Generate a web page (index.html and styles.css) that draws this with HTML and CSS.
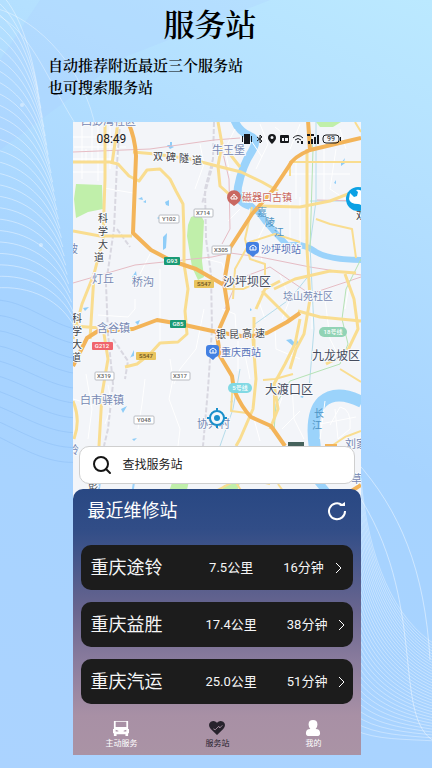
FILE: index.html
```html
<!DOCTYPE html>
<html lang="zh-CN">
<head>
  <meta charset="UTF-8">
  <meta name="viewport" content="width=device-width, initial-scale=1.0">
  <title>服务站</title>
  <link rel="stylesheet" href="styles.css">
</head>
<body>

  <svg class="waves" viewBox="0 0 432 768" preserveAspectRatio="none" aria-hidden="true">
    <path class="beam" d="M0 60L40 0H270L125 57L0 150Z"/>
    <g id="waves"></g>
    <circle class="spark" cx="22" cy="105" r="2"/>
    <circle class="spark" cx="41" cy="245" r="2"/>
  </svg>

  <header class="intro">
    <h1>服务站</h1>
    <p>自动推荐附近最近三个服务站<br>也可搜索服务站</p>
  </header>

  <main class="phone">
    <section class="map">
      <svg class="map-art" viewBox="73 123 288 376" preserveAspectRatio="xMidYMin slice" role="img" aria-label="地图">
        <!-- parks -->
        <g class="park">
          <path d="M76 185L102 186L103 210L88 213L76 219L74 200Z"/>
          <path d="M191 218L200 215L204 222L202 262L204 278L198 281L192 268L187 237L188 226Z"/>
          <path d="M316 123H341L333 128L320 128Z"/>
          <path d="M172 484L189 482L186 495L168 495Z"/>
          <path d="M224 486L240 484L236 495H220Z"/>
        </g>

        <!-- water -->
        <g class="river">
          <path class="w7" d="M234 120Q238 132 250 137Q259 140 252 152Q242 167 238 188Q236 203 250 207"/>
          <path class="w5" d="M246 203Q258 211 265 222Q278 237 288 247Q302 243 316 253Q330 261 361 261"/>
          <path class="w11" d="M315 450Q310 415 322 403Q336 390 362 403"/>
          <path class="w7" d="M316 480L330 497"/>
          <path class="w2" d="M100 483L98 496M134 483L132 496"/>
        </g>
        <g class="pond">
          <path d="M167 146h3v-3h2v4l2 1l-4 2zM138 200l4-2l1 3zM143 203l3-2v3zM163 238l4-4l-1 15l-3 2zM157 219l3-2v4zM165 203l4-2v6l-3-1zM132 278l4-6l1 7l-5 4zM83 309l6-1l-4 4zM135 323l5-2l-2 5zM130 359l4-8v6l-3 1zM121 410l6-3l-4 7zM132 440l5-1l-3 3zM286 341l5-1l4 4l2-3l2 4l-6 2zM341 164l4-5l-1 4l4-1l-7 5zM334 184l2-3v4zM250 309l2 2l-2 1zM230 403l3-2l-1 3zM300 398l4-3l-1 4zM341 465l3-2v3z"/>
        </g>

        <!-- small streets -->
        <g class="street">
          <path d="M73 138H100M74 148H126M82 125V180M92 127V163M98 123V182M110 123V170M118 130L117 170M73 160H112M73 173H106M86 150V163H120M104 189L133 194"/>
          <path d="M160 270V344M170 360L173 380L169 400L180 430L178 447M204 310L196 350L180 370L174 385M145 380L142 405L138 430M135 300V310L128 318L98 316"/>
          <path d="M206 260L222 264L226 275M252 143L262 158M240 210L228 222M262 205L268 220L258 240L262 262M270 200L284 205M290 203V240M300 198V246M310 203L306 240M280 175H350M296 160V200M324 145V205M336 150L330 190L345 200"/>
          <path d="M222 310L235 315L236 330L220 340M238 342V372M230 350L245 356L250 380M258 300L265 320M275 330L276 350L300 360M254 420L260 442M270 385L282 399L276 415M292 385L294 420L304 440M300 412L282 430M325 402L320 440M335 410L338 440L350 430Q352 410 340 408L330 426M320 425L356 418M73 400L90 405M86 375L92 410L88 440M108 386L112 405L105 425"/>
          <path d="M235 130L225 150L230 175M260 125L268 145L256 170M275 128L290 140M300 125L290 150M340 130L346 150M312 290V330M325 300L330 340L340 360M350 280L345 310M280 276L290 300L282 320M200 145L204 165L195 190M150 255L140 275"/>
        </g>

        <!-- railways and metro lines -->
        <g class="rail">
          <path d="M120 123L117 165L114 230L106 285L108 335L113 385L108 430L104 447"/>
          <path d="M214 123L213 160L205 190L206 240L211 275L212 330L208 390L203 447"/>
          <path d="M213 165L202 205M113 340L128 362L125 380M117 230L130 248"/>
        </g>
        <path class="metro-pink" d="M73 153L150 150L214 141L240 139M73 284L135 266L212 258L230 254L260 258L310 268L361 276M225 310L238 280L270 268L310 295L361 278M222 150L229 180L230 230L222 245"/>
        <path class="metro-blue" d="M316 123V202M361 202H310M316 202L310 246L314 330L309 390M240 370L233 410L220 447M255 325L290 300L310 275"/>
        <path class="metro-pink" d="M317 201L361 202"/>
        <path class="metro-green" d="M361 260L346 290L342 320L348 345L340 365L325 370L290 382L276 405L274 432L285 447M308 123L313 150L310 250"/>

        <!-- yellow roads -->
        <g class="road">
          <path class="w3" d="M105 123V180L103 240L94 275L82 305L73 340"/>
          <path class="w3" d="M133 153L155 155L190 160L213 166L241 173L262 183L278 192"/>
          <path class="w3" d="M73 163H110L118 165L129 177L139 182L147 171L160 170L170 180L176 192L183 205L184 235L184 265L188 290L185 312L187 335L178 343L160 344L150 355L137 365L125 368"/>
          <path class="w3" d="M73 232L100 237H132M118 123L112 165M94 276L90 340M73 327L102 329"/>
          <path class="w3" d="M104 335L108 360L102 395L99 447M73 402Q81 421 74 440"/>
          <path class="w3" d="M218 123L222 145L218 167L220 187L230 196M260 207L300 208L330 202L361 190M226 150L240 168"/>
          <path class="w2" d="M252 208L245 240L250 260L265 265L265 280L243 290L226 290M233 300L235 270L250 243L275 235L300 243M290 177V163H361M355 123L361 133M316 220L330 225L352 230L356 259"/>
          <path class="w3" d="M307 150V250L310 300L304 335L296 350L290 370M274 290L295 280L330 272L356 274M256 310L265 290L280 282M253 340L256 380L253 410L240 440L236 447M254 318L254 350M290 320L270 300L262 292"/>
          <path class="w3" d="M298 312L320 318L361 322M300 320L295 345L285 365L274 385L278 410L270 430M345 275L354 300L358 330L346 355L326 365"/>
          <path class="w2" d="M233 380L231 412L247 414M263 381L275 380L293 375M340 370L361 383M274 394L274 420M247 480L270 485M330 448L345 438L361 432M210 495L235 482L244 496M278 485L286 496"/>
        </g>

        <!-- highways -->
        <g class="highway">
          <path d="M127 121Q135 137 136 157L133 234L151 251L172 262L196 270L224 286"/>
          <path d="M308 121L310 151Q293 158 289 167L273 191L252 215L230 249L224 284L228 310L217 335L220 357L232 377L234 391Q242 409 251 418L271 427L285 447M310 151L361 139"/>
          <path d="M73 367L87 339L98 332L133 330L157 321L180 325L217 333L247 338L267 334L287 323L300 314"/>
          <path d="M325 447H337M350 493L361 486"/>
        </g>

        <!-- road number plates -->
        <g class="plate">
          <rect x="159" y="216" width="20" height="8" rx="1"/><text x="169" y="222">Y102</text>
          <rect x="194" y="210" width="19" height="8" rx="1"/><text x="203" y="216">X714</text>
          <rect x="212" y="247" width="19" height="8" rx="1"/><text x="221" y="253">X305</text>
          <rect x="95" y="373" width="19" height="8" rx="1"/><text x="104" y="379">X319</text>
          <rect x="171" y="373" width="19" height="8" rx="1"/><text x="180" y="379">X317</text>
          <rect x="134" y="417" width="20" height="8" rx="1"/><text x="144" y="423">Y048</text>
        </g>
        <g class="plate green">
          <rect x="164" y="258" width="16" height="8" rx="1"/><text x="172" y="264">G93</text>
          <rect x="170" y="321" width="16" height="8" rx="1"/><text x="178" y="327">G85</text>
          <rect class="dark" x="288" y="443" width="16" height="8"/>
        </g>
        <g class="plate amber">
          <rect x="194" y="281" width="20" height="8" rx="1"/><text x="204" y="287">S547</text>
          <rect x="136" y="353" width="20" height="8" rx="1"/><text x="146" y="359">S547</text>
        </g>
        <g class="plate red">
          <rect x="92" y="343" width="21" height="8" rx="1"/><text x="102" y="349">G212</text>
        </g>
        <g class="plate line5">
          <rect x="228" y="384" width="24" height="10" rx="5"/><text x="240" y="391">5号线</text>
        </g>
        <g class="plate line18">
          <rect x="319" y="328" width="28" height="10" rx="5"/><text x="333" y="335">18号线</text>
        </g>

        <!-- place names -->
        <g class="place">
          <text x="81" y="126">西彭湾社区</text>
          <text x="212" y="155">牛王堡</text>
          <text x="92" y="284">灯丘</text>
          <text x="132" y="287">桥沟</text>
          <text x="97" y="333">含谷镇</text>
          <text x="80" y="405">白市驿镇</text>
          <text class="small" x="283" y="301">埝山苑社区</text>
          <text x="197" y="429">协兴村</text>
          <text x="345" y="449">刘家</text>
          <text x="351" y="484">草</text>
          <text x="67" y="254">坡</text>
          <text x="68" y="455">岭</text>
        </g>
        <g class="district">
          <text x="223" y="287">沙坪坝区</text>
          <text x="312" y="361">九龙坡区</text>
          <text x="265" y="395">大渡口区</text>
        </g>
        <g class="road-name">
          <text><tspan x="153" y="161">双</tspan><tspan x="166" y="162">碑</tspan><tspan x="179" y="163">隧</tspan><tspan x="192" y="165">道</tspan></text>
          <text><tspan x="98" y="223">科</tspan><tspan x="98" y="236">学</tspan><tspan x="98" y="249">大</tspan><tspan x="94" y="262">道</tspan></text>
          <text><tspan x="72" y="323">科</tspan><tspan x="72" y="336">学</tspan><tspan x="72" y="349">大</tspan><tspan x="71" y="362">道</tspan></text>
          <text y="339"><tspan x="216">银</tspan><tspan x="229">昆</tspan><tspan x="242" y="338">高</tspan><tspan x="255" y="338">速</tspan></text>
          <text x="88" y="490">彭</text>
          <text x="356" y="220">双</text>
        </g>
        <g class="water-name">
          <text><tspan x="257" y="217">嘉</tspan><tspan x="265" y="227">陵</tspan><tspan x="274" y="237">江</tspan></text>
          <text><tspan x="314" y="418">长</tspan><tspan x="312" y="430">江</tspan></text>
        </g>

        <!-- points of interest -->
        <g class="poi-red">
          <path d="M234 207l-4-3a7 7 0 1 1 8 0z"/>
          <path class="glyph" d="M231 200h6v-2h-1l-2-3l-2 3h-1zM234 197v3"/>
          <text x="242" y="202">磁器口古镇</text>
        </g>
        <g class="poi-blue">
          <path d="M253 258l-4-3q-3-1-3-4v-5q0-3 3-3h7q3 0 3 3v5q0 3-3 4z"/>
          <path class="glyph" d="M250 251v-3l3-2l3 2v3zM253 248v3"/>
          <text x="261" y="254">沙坪坝站</text>
          <path d="M213 361l-4-3q-3-1-3-4v-5q0-3 3-3h7q3 0 3 3v5q0 3-3 4z"/>
          <path class="glyph" d="M210 354v-3l3-2l3 2v3zM213 351v3"/>
          <text x="221" y="357">重庆西站</text>
        </g>

        <!-- current position -->
        <g class="locate">
          <circle cx="217" cy="419" r="7"/>
          <path d="M217 409v4M217 425v4M207 419h4M223 419h4"/>
          <circle class="dot" cx="217" cy="419" r="3"/>
        </g>

        <!-- repair shop marker -->
        <g class="repair">
          <circle cx="358" cy="200" r="12"/>
          <path d="M350 194l4 4l3-1l1-4l-2-2q6-1 8 4v14q-3-4-6-4q-8 0-9-5z"/>
        </g>
      </svg>

      <div class="status">
        <time>08:49</time>
        <svg class="status-icons" viewBox="0 0 102 12" aria-hidden="true">
          <path d="M3 1h6v10h-6zM1 3h1v6h-1zM10 3h1v6h-1z"/>
          <path class="line" d="M16 4l5 4l-2 2v-8l2 2l-5 4"/>
          <path d="M31 11q-4-4-4-6a4 4 0 0 1 8 0q0 2-4 6zM31 3a1 1 0 0 0 0 3a1 1 0 0 0 0-3z" fill-rule="evenodd"/>
          <path d="M40 2h7q1 0 1 1v6q0 1-1 1h-7q-1 0-1-1v-6q0-1 1-1zM41 5v3h2v-3zM44 5v3h3v-3z" fill-rule="evenodd"/>
          <path class="line" d="M52 5q5-5 10 0M54 7q3-3 6 0"/>
          <circle cx="57" cy="9" r="1"/><path d="M60 8h2v3h-2z"/>
          <path d="M67 8h2v3h-2zM70 6h2v5h-2zM73 4h2v7h-2zM76 2h2v9h-2zM66 1h3v2h-3zM70 1h3v2h-3z"/>
          <rect class="battery" x="82" y="2" width="16" height="8" rx="3"/>
          <path d="M99 4h1v4h-1z"/>
          <text x="90" y="8">99</text>
        </svg>
      </div>

      <form class="search" role="search">
        <label for="q" aria-label="搜索">
          <svg viewBox="0 0 20 20"><circle cx="9" cy="9" r="7"/><path d="M14 14l4 4"/></svg>
        </label>
        <input id="q" type="search" placeholder="查找服务站">
      </form>
    </section>

    <section class="panel">
      <div class="panel-head">
        <h2>最近维修站</h2>
        <button type="button" class="refresh" aria-label="刷新">
          <svg viewBox="0 0 20 20"><path d="M15 4A8 8 0 1 0 18 10"/><path class="tip" d="M12 5h6V1z"/></svg>
        </button>
      </div>

      <ul class="stations">
        <li><a href="#">
          <span class="name">重庆途铃</span>
          <span class="distance">7.5公里</span>
          <span class="time">16分钟</span>
          <svg class="arrow" viewBox="0 0 8 12"><path d="M1 1l5 5l-5 5"/></svg>
        </a></li>
        <li><a href="#">
          <span class="name">重庆益胜</span>
          <span class="distance">17.4公里</span>
          <span class="time">38分钟</span>
          <svg class="arrow" viewBox="0 0 8 12"><path d="M1 1l5 5l-5 5"/></svg>
        </a></li>
        <li><a href="#">
          <span class="name">重庆汽运</span>
          <span class="distance">25.0公里</span>
          <span class="time">51分钟</span>
          <svg class="arrow" viewBox="0 0 8 12"><path d="M1 1l5 5l-5 5"/></svg>
        </a></li>
      </ul>

      <nav class="tabs">
        <a href="#">
          <svg viewBox="0 0 18 18"><path fill-rule="evenodd" d="M1 1h16v9h1v5h-1v3h-3v-2H4v2H1v-3H0v-5h1zM3 2v6h12V2zM3 11v2h3v-1zM15 11v2h-3v-1z"/></svg>
          主动服务
        </a>
        <a href="#" class="active">
          <svg viewBox="0 0 18 18"><path d="M9 17L2 10Q-2 5 2 2Q6 0 9 3Q12 0 16 2Q20 5 16 10Z"/><path class="shake" d="M5 10l2 1l4-4l1 2l3-3"/></svg>
          服务站
        </a>
        <a href="#">
          <svg viewBox="0 0 18 18"><path d="M9 0q5 0 5 5q0 3-2 5q5 0 5 5q0 3-2 3H3q-2 0-2-3q0-5 5-5q-2-2-2-5q0-5 5-5z"/></svg>
          我的
        </a>
      </nav>
    </section>
  </main>

  <script>
    const waves = document.getElementById("waves");

    // each set blends from the first curve to the second one
    const sets = [
      { from: [-5, -12, 15, 5, 28, 35, 38, 90], to: [-5, 288, 30, 285, 62, 300, 76, 330], n: 26, alpha: 0.4 },
      { from: [-5, 8, 40, 20, 85, 70, 96, 130], to: [-5, 14, 30, 30, 45, 75, 76, 125], n: 1, alpha: 0.35 },
      { from: [-5, 300, 25, 300, 50, 325, 80, 330], to: [-5, 435, 25, 450, 50, 465, 80, 462], n: 9, color: "#6fa9ec", alpha: 0.25 },
      { from: [361, 478, 368, 560, 395, 620, 436, 645], to: [355, 730, 375, 740, 405, 739, 436, 741], n: 34, alpha: 0.35 },
      { from: [355, 460, 400, 510, 425, 570, 430, 660], to: [355, 490, 430, 600, 390, 720, 436, 742], n: 1, alpha: 0.45 }
    ];

    sets.forEach(function(s) {
      for (let i = 0; i <= s.n; i++) {
        const p = s.from.map((v, k) => v + (s.to[k] - v) * i / s.n);
        const path = document.createElementNS("http://www.w3.org/2000/svg", "path");
        path.setAttribute("d", `M${p[0]} ${p[1]}C${p.slice(2).join(" ")}`);
        path.setAttribute("stroke", s.color || "#fff");
        path.setAttribute("stroke-opacity", s.alpha);
        waves.appendChild(path);
      }
    });
  </script>

</body>
</html>
```
FILE: styles.css
```css
* {
  box-sizing: border-box;
}

body {
  position: relative;
  margin: 0;
  min-height: 100vh;
  overflow-x: hidden;
  font-family: Roboto, "Noto Sans CJK SC", sans-serif;
  background: linear-gradient(205deg, #bbe9ff 0%, #b4e0ff 20%, #a6d3ff 50%, #abd3ff 100%);
}

.waves {
  position: absolute;
  inset: 0;
  width: 100%;
  height: 100%;
  z-index: -1;
}

#waves {
  fill: none;
}

.beam {
  fill: #a9c8ff;
  fill-opacity: 0.2;
}

.spark {
  fill: #fff;
  fill-opacity: 0.4;
}

.intro {
  font-family: "Noto Serif CJK SC", "Noto Sans CJK SC", serif;
  color: #000;
}

.intro h1 {
  margin: 0;
  padding-right: 12px;
  font-size: 31px;
  line-height: 46px;
  font-weight: 600;
  text-align: center;
}

.intro p {
  margin: 8px 48px 0;
  font-size: 15px;
  line-height: 22px;
  font-weight: 600;
}

.phone {
  width: 66.67%;
  margin: 24px 0 12px 17%;
}

.map {
  position: relative;
  display: flex;
  flex-direction: column;
  justify-content: space-between;
  aspect-ratio: 288 / 376;
  padding: 10px 6px 14px;
  overflow: hidden;
  background: #f3f5f9;
}

.map-art {
  position: absolute;
  inset: 0;
  width: 100%;
  height: 100%;
  fill: none;
}

.park { fill: #c0efaa; }
.river { stroke: #9bd3fb; }
.pond { fill: #8fcdf8; }
.street { stroke: #fff; stroke-width: 1; }
.rail { stroke: #d9d8e1; stroke-width: 2; stroke-dasharray: 5 2; }
.metro-pink { stroke: #e6bcc4; }
.metro-blue { stroke: #b5dcea; }
.metro-green { stroke: #b5e3b4; }
.road { stroke: #f9dd90; stroke-linejoin: round; }
.highway { stroke: #f3b459; stroke-width: 4; stroke-linejoin: round; }

.w2 { stroke-width: 2; }
.w3 { stroke-width: 3; }
.w5 { stroke-width: 6; }
.w7 { stroke-width: 8; }
.w11 { stroke-width: 12; }

.plate {
  fill: #fff;
  stroke: #b9bcc2;
  font-size: 6px;
  font-weight: 500;
  text-anchor: middle;
}

.plate text {
  fill: #666;
  stroke: none;
}

.green { fill: #199a75; stroke: none; }
.green .dark { fill: #46625c; }
.amber { fill: #e9c45e; stroke: none; }
.red { fill: #f0646c; stroke: none; }
.line5 { fill: #82d9e4; stroke: none; }
.line18 { fill: #91d3b5; stroke: none; }
.green text, .red text, .line5 text, .line18 text { fill: #fff; }
.amber text { fill: #6c531e; }

.place, .district, .road-name, .water-name, .poi-red text, .poi-blue text {
  font-size: 10px;
  paint-order: stroke;
  stroke: #f8fafc;
  stroke-width: 2;
}

.place { fill: #7688b3; font-size: 11px; }
.place .small { font-size: 10px; }
.district { fill: #454c5e; font-size: 12px; }
.road-name { fill: #3f4248; }
.water-name { fill: #4d93c4; stroke: none; }
.poi-red { fill: #c96861; }
.poi-blue { fill: #4380e2; }
.poi-blue text { fill: #5672b8; }
.glyph { fill: none; stroke: #fff; }

.locate {
  stroke: #1a8fcb;
  stroke-width: 2;
  fill: #f3f8fc;
}

.locate .dot { fill: #1a8fcb; stroke: none; }
.repair circle { fill: #0ca1e4; }
.repair path { fill: #fff; }

.status {
  position: relative;
  display: flex;
  align-items: center;
  justify-content: space-between;
  padding: 0 12px 0 17px;
  color: #17191d;
  font-size: 12px;
  line-height: 14px;
}

.status-icons {
  width: 102px;
  height: 12px;
  fill: #17191d;
}

.status-icons .line, .status-icons .battery {
  fill: none;
  stroke: #17191d;
}

.status-icons text {
  font-size: 7px;
  text-anchor: middle;
}

.search {
  position: relative;
  display: flex;
  align-items: center;
  gap: 10px;
  height: 38px;
  padding: 0 12px;
  background: #fff;
  border: 1px solid #cfcfcf;
  border-radius: 10px;
}

.search label {
  display: flex;
}

.search svg {
  width: 20px;
  height: 20px;
  fill: none;
  stroke: #151515;
  stroke-width: 2;
  stroke-linecap: round;
}

.search input {
  flex: 1;
  min-width: 0;
  padding: 0;
  border: none;
  outline: none;
  background: none;
  font-family: inherit;
  font-size: 12px;
  line-height: 18px;
}

.search input::placeholder {
  color: #222;
  opacity: 1;
}

.panel {
  position: relative;
  margin-top: -9px;
  padding: 6px 8px 5px;
  border-radius: 10px 10px 0 0;
  background: linear-gradient(#294883 0%, #314d87 15%, #68658f 45%, #8a7c9d 65%, #a890a5 85%, #aa93a5 100%);
  color: #fff;
}

.panel-head {
  display: flex;
  align-items: center;
  justify-content: space-between;
  padding: 0 6px;
}

.panel-head h2 {
  margin: 0;
  font-size: 18px;
  line-height: 32px;
  font-weight: 400;
}

.refresh {
  display: flex;
  padding: 0;
  border: none;
  background: none;
  cursor: pointer;
}

.refresh svg {
  width: 20px;
  height: 20px;
  fill: none;
  stroke: #fff;
  stroke-width: 2;
}

.refresh .tip {
  fill: #fff;
  stroke: none;
}

.stations {
  display: flex;
  flex-direction: column;
  gap: 12px;
  margin: 18px 0 0;
  padding: 0;
  list-style: none;
}

.stations a {
  display: flex;
  align-items: center;
  height: 45px;
  padding-left: 9px;
  border-radius: 10px;
  background: #1c1c1c;
  color: #f5f5f5;
  font-size: 13px;
  line-height: 24px;
  text-decoration: none;
}

.name {
  font-size: 18px;
}

.distance {
  margin-left: auto;
  padding-left: 36px;
}

.time {
  margin-left: 30px;
}

.arrow {
  width: 8px;
  height: 12px;
  margin: 0 auto 0 11px;
  fill: none;
  stroke: #fff;
}

.tabs {
  display: flex;
  margin: 16px -8px 0;
}

.tabs a {
  flex: 1;
  display: flex;
  flex-direction: column;
  align-items: center;
  gap: 2px;
  color: #fff;
  font-size: 8px;
  line-height: 12px;
  text-decoration: none;
}

.tabs svg {
  width: 16px;
  height: 16px;
  fill: currentColor;
}

.tabs .active {
  color: #27222c;
}

.shake {
  fill: none;
  stroke: #aa93a5;
}
```
